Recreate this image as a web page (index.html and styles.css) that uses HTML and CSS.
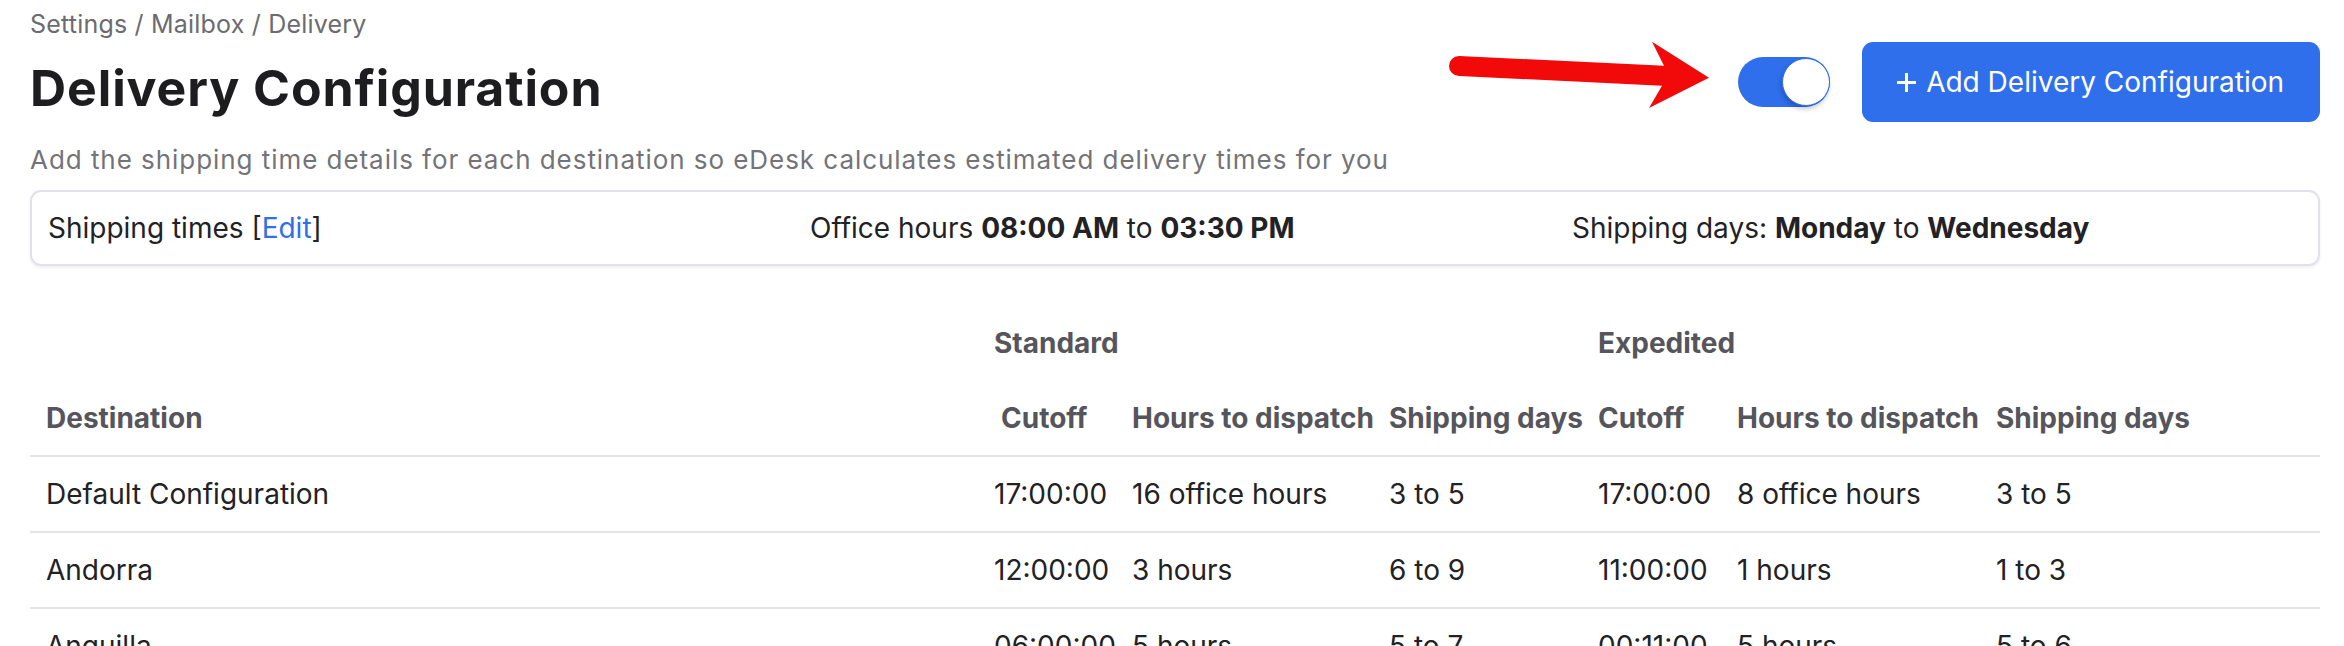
FILE: index.html
```html
<!DOCTYPE html>
<html lang="en">
<head>
<meta charset="utf-8">
<title>Delivery Configuration</title>
<link rel="stylesheet" href="styles.css">
</head>
<body>
<div class="page">
  <header class="head">
    <div class="head-text">
      <div class="crumbs">Settings / Mailbox / Delivery</div>
      <h1 class="title">Delivery Configuration</h1>
    </div>
    <div class="actions">
      <svg class="arrow" width="280" height="90" viewBox="0 0 280 90" aria-hidden="true">
        <path d="M22 26 L227 35.7 L215 11.7 L272 47.7 L212 78 L225 55.7 L22 46 A10 10 0 0 1 22 26 Z" fill="#f20909"/>
      </svg>
      <span class="toggle"><span class="knob"></span></span>
      <button class="add-btn" type="button">
        <svg class="plus" width="21" height="21" viewBox="0 0 21 21" aria-hidden="true">
          <path d="M10.5 1 V20 M1 10.5 H20" stroke="#fff" stroke-width="3" fill="none"/>
        </svg>
        <span>Add Delivery Configuration</span>
      </button>
    </div>
  </header>
  <p class="subtitle">Add the shipping time details for each destination so eDesk calculates estimated delivery times for you</p>

  <div class="summary">
    <div class="summary-cell">Shipping times [<a class="edit" href="#">Edit</a>]</div>
    <div class="summary-cell">Office hours <b>08:00 AM</b> to <b>03:30 PM</b></div>
    <div class="summary-cell">Shipping days: <b>Monday</b> to <b>Wednesday</b></div>
  </div>

  <table class="grid">
    <colgroup>
      <col class="c-dest">
      <col class="c-cut">
      <col class="c-hours">
      <col class="c-days">
      <col class="c-cut2">
      <col class="c-hours2">
      <col class="c-days2">
    </colgroup>
    <thead>
      <tr class="group-row">
        <th></th>
        <th colspan="3">Standard</th>
        <th colspan="3">Expedited</th>
      </tr>
      <tr class="col-row">
        <th>Destination</th>
        <th class="cut-std">Cutoff</th>
        <th>Hours to dispatch</th>
        <th>Shipping days</th>
        <th>Cutoff</th>
        <th>Hours to dispatch</th>
        <th>Shipping days</th>
      </tr>
    </thead>
    <tbody>
      <tr>
        <td>Default Configuration</td>
        <td>17:00:00</td>
        <td>16 office hours</td>
        <td>3 to 5</td>
        <td>17:00:00</td>
        <td>8 office hours</td>
        <td>3 to 5</td>
      </tr>
      <tr>
        <td>Andorra</td>
        <td>12:00:00</td>
        <td>3 hours</td>
        <td>6 to 9</td>
        <td>11:00:00</td>
        <td>1 hours</td>
        <td>1 to 3</td>
      </tr>
      <tr>
        <td>Anguilla</td>
        <td>06:00:00</td>
        <td>5 hours</td>
        <td>5 to 7</td>
        <td>00:11:00</td>
        <td>5 hours</td>
        <td>5 to 6</td>
      </tr>
    </tbody>
  </table>
</div>
</body>
</html>
```

FILE: styles.css
```css
html, body {
  margin: 0;
  padding: 0;
  background: #ffffff;
  overflow: hidden;
}

body {
  font-family: Inter, "Noto Sans", "Liberation Sans", sans-serif;
  color: #222225;
}

.page {
  padding: 0 24px 0 30px;
}

.head {
  display: flex;
  justify-content: space-between;
  align-items: flex-start;
}

.crumbs {
  padding-top: 6px;
  font-size: 25px;
  line-height: 36px;
  letter-spacing: 0.2px;
  color: #6b6b70;
}

.title {
  margin: 16px 0 0;
  font-size: 50px;
  line-height: 60px;
  font-weight: 700;
  letter-spacing: 0.9px;
  color: #1d1d1f;
}

.actions {
  position: relative;
  margin-top: 42px;
  display: flex;
  align-items: center;
  gap: 32px;
}

.arrow {
  position: absolute;
  left: -301px;
  top: -12px;
}

.toggle {
  position: relative;
  display: block;
  width: 92px;
  height: 50px;
  border-radius: 25px;
  background: #2f6fec;
}

.knob {
  position: absolute;
  right: 0;
  top: 1px;
  width: 46px;
  height: 46px;
  border-radius: 50%;
  background: #ffffff;
  border: 1px solid #2f6fec;
  box-shadow: -1px 3px 5px rgba(0, 0, 0, 0.22);
}

.add-btn {
  display: flex;
  align-items: center;
  gap: 9px;
  height: 80px;
  padding: 0 36px 0 34px;
  border: none;
  border-radius: 11px;
  background: #2f6fec;
  color: #ffffff;
  font-family: inherit;
  font-size: 28px;
  font-weight: 400;
  cursor: pointer;
}

.plus {
  display: block;
}

.subtitle {
  margin: 20px 0 0;
  font-size: 26px;
  line-height: 36px;
  letter-spacing: 0.95px;
  color: #737378;
}

.summary {
  margin-top: 12px;
  display: grid;
  grid-template-columns: repeat(3, 1fr);
  align-items: center;
  height: 76px;
  box-sizing: border-box;
  border: 2px solid #e1e0ec;
  border-radius: 11px;
  box-shadow: 0 2px 3px rgba(40, 40, 90, 0.07);
  font-size: 28px;
  line-height: 40px;
  color: #222225;
}

.summary-cell {
  padding: 0 16px;
  white-space: nowrap;
}

.summary b {
  font-weight: 700;
}

.edit {
  color: #2f6fec;
  text-decoration: none;
}

.grid {
  margin-top: 40px;
  width: 100%;
  table-layout: fixed;
  border-collapse: collapse;
  font-size: 28px;
  line-height: 40px;
}

.c-dest { width: 956px; }
.c-cut { width: 138px; }
.c-hours { width: 257px; }
.c-days { width: 209px; }
.c-cut2 { width: 139px; }
.c-hours2 { width: 259px; }
.c-days2 { width: 332px; }

.grid th,
.grid td {
  padding: 17px 8px;
  text-align: left;
  white-space: nowrap;
}

.grid th:first-child,
.grid td:first-child {
  padding-left: 16px;
}

.grid th {
  font-weight: 700;
  color: #55555b;
}

.grid .cut-std {
  padding-left: 15px;
}

.col-row th {
  padding-top: 18px;
  padding-bottom: 17px;
}

.grid tbody tr,
.col-row {
  border-bottom: 2px solid #e3e2ee;
}

.grid td {
  color: #222225;
}
```
